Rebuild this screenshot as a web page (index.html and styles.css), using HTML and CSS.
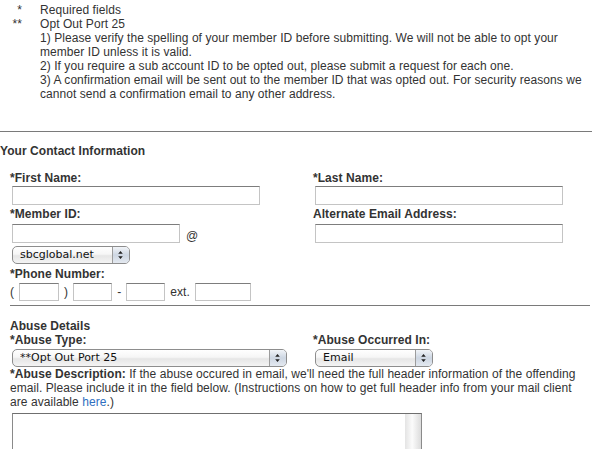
FILE: index.html
```html
<!DOCTYPE html>
<html lang="en">
<head>
  <meta charset="UTF-8">
  <title>Report Abuse - Opt Out Port 25</title>
  <link rel="stylesheet" href="styles.css">
</head>
<body>

<div class="notes">
  <span class="mark">*</span>
  <div>Required fields</div>
  <span class="mark">**</span>
  <div>
    Opt Out Port 25<br>
    1) Please verify the spelling of your member ID before submitting. We will not be able to opt your member ID unless it is valid.<br>
    2) If you require a sub account ID to be opted out, please submit a request for each one.<br>
    3) A confirmation email will be sent out to the member ID that was opted out. For security reasons we cannot send a confirmation email to any other address.
  </div>
</div>

<hr class="rule">

<h3 class="section">Your Contact Information</h3>

<div class="fields">
  <div class="field">
    <label for="first_name">*First Name:</label>
    <input class="text" id="first_name" style="width:248px">
  </div>
  <div class="field">
    <label for="last_name">*Last Name:</label>
    <input class="text" id="last_name" style="width:248px">
  </div>
  <div class="field member">
    <label for="member_id">*Member ID:</label>
    <div class="member-row">
      <input class="text" id="member_id" style="width:168px">
      <span>@</span>
    </div>
    <span class="picker" style="width:118px">
      <select id="domain">
        <option>sbcglobal.net</option>
        <option>att.net</option>
        <option>bellsouth.net</option>
      </select>
      <svg class="spin" viewBox="0 0 17 16" preserveAspectRatio="none">
        <defs>
          <linearGradient id="sg1" x1="0" y1="0" x2="0" y2="1">
            <stop offset="0" stop-color="#f1f4f8"/>
            <stop offset="0.5" stop-color="#cdd6e2"/>
            <stop offset="1" stop-color="#e4e9f0"/>
          </linearGradient>
        </defs>
        <rect width="17" height="16" fill="url(#sg1)"/>
        <path d="M0.5 0V16" stroke="#9c9c9c"/>
        <path d="M6.2 6.8L8.5 4.1L10.8 6.8Z M6.2 9.2L8.5 11.9L10.8 9.2Z" fill="#222"/>
      </svg>
    </span>
  </div>
  <div class="field">
    <label for="alt_email">Alternate Email Address:</label>
    <input class="text alt" id="alt_email" style="width:248px">
  </div>
</div>

<div class="field phone">
  <label>*Phone Number:</label>
  <div class="phone-row">
    <span>(</span>
    <input class="text" style="width:40px">
    <span>)</span>
    <input class="text" style="width:39px">
    <span>-</span>
    <input class="text" style="width:39px">
    <span>ext.</span>
    <input class="text" style="width:56px">
  </div>
</div>

<hr class="rule inset">

<div class="abuse">
  <h4 class="sub">Abuse Details</h4>
  <div class="fields">
    <div class="field">
      <label for="abuse_type">*Abuse Type:</label>
      <span class="picker" style="width:275px">
        <select id="abuse_type">
          <option>**Opt Out Port 25</option>
          <option>Spam</option>
          <option>Phishing</option>
        </select>
        <svg class="spin" viewBox="0 0 17 16" preserveAspectRatio="none">
          <defs>
            <linearGradient id="sg2" x1="0" y1="0" x2="0" y2="1">
              <stop offset="0" stop-color="#f1f4f8"/>
              <stop offset="0.5" stop-color="#cdd6e2"/>
              <stop offset="1" stop-color="#e4e9f0"/>
            </linearGradient>
          </defs>
          <rect width="17" height="16" fill="url(#sg2)"/>
          <path d="M0.5 0V16" stroke="#9c9c9c"/>
          <path d="M6.2 6.8L8.5 4.1L10.8 6.8Z M6.2 9.2L8.5 11.9L10.8 9.2Z" fill="#222"/>
        </svg>
      </span>
    </div>
    <div class="field">
      <label for="abuse_in">*Abuse Occurred In:</label>
      <span class="picker" style="width:118px">
        <select id="abuse_in">
          <option>Email</option>
          <option>Web</option>
          <option>Other</option>
        </select>
        <svg class="spin" viewBox="0 0 17 16" preserveAspectRatio="none">
          <defs>
            <linearGradient id="sg3" x1="0" y1="0" x2="0" y2="1">
              <stop offset="0" stop-color="#f1f4f8"/>
              <stop offset="0.5" stop-color="#cdd6e2"/>
              <stop offset="1" stop-color="#e4e9f0"/>
            </linearGradient>
          </defs>
          <rect width="17" height="16" fill="url(#sg3)"/>
          <path d="M0.5 0V16" stroke="#9c9c9c"/>
          <path d="M6.2 6.8L8.5 4.1L10.8 6.8Z M6.2 9.2L8.5 11.9L10.8 9.2Z" fill="#222"/>
        </svg>
      </span>
    </div>
  </div>
  <p class="desc"><b>*Abuse Description:</b> If the abuse occured in email, we'll need the full header information of the offending email. Please include it in the field below. (Instructions on how to get full header info from your mail client are available <a href="#">here</a>.)</p>
  <textarea class="details" id="descripcion"></textarea>
</div>

</body>
</html>
```

FILE: styles.css
```css
html { overflow: hidden; }
body { margin: 0; padding-top: 3px; font-family: "Liberation Sans", Arial, Helvetica, sans-serif; font-size: 12px; line-height: 14px; letter-spacing: 0.06px; color: #333; background: #fff; }

.notes { display: grid; grid-template-columns: 22px 1fr; column-gap: 18px; }
.notes .mark { text-align: right; }

.rule { height: 0; border: 0; border-top: 1px solid #7a7a7a; margin: 30px 0 0; }
.rule.inset { margin: 4px 2px 0 10px; }

.section { margin: 12px 0 0; font-size: 12px; line-height: 14px; font-weight: bold; }
.sub { margin: 0; font-size: 12px; line-height: 14px; font-weight: bold; }

.fields { display: grid; grid-template-columns: 303px 1fr; padding-left: 10px; }
.section + .fields { margin-top: 13px; }
.field label { display: block; font-weight: bold; }
.fields .field:nth-child(n+3) label { margin-top: 2px; }

.text { display: block; box-sizing: border-box; height: 19px; margin: 1px 0 0 2px; padding: 1px 3px; border: 1px solid #c4c4c4; border-top-color: #7d7d7d; background: #fff; font: 12px "Liberation Sans", Arial, sans-serif; }
.text.alt { margin-top: 3px; }

.member-row { display: flex; align-items: flex-end; gap: 6px; margin-top: 3px; }
.member-row .text { margin-top: 0; }

.picker { position: relative; display: block; height: 18px; margin: 3px 0 0 2px; }
.picker select { appearance: none; -webkit-appearance: none; display: block; box-sizing: border-box; width: 100%; height: 18px; margin: 0; padding: 0 0 0 7px; border: 1px solid #8d8d8d; border-radius: 5px; background: linear-gradient(#ffffff, #f6f6f6 45%, #e6e6e6 55%, #f4f4f4); font: 11px "DejaVu Sans", sans-serif; color: #111; line-height: 16px; }
.spin { position: absolute; top: 1px; right: 1px; width: 17px; height: 16px; border-radius: 0 4px 4px 0; pointer-events: none; }

.phone { padding-left: 10px; margin-top: 3px; }
.phone label { margin-top: 1px; }
.phone-row { display: flex; align-items: center; gap: 5px; margin-top: 2px; }
.phone-row .text { height: 18px; margin: 0; }

.abuse { padding-left: 10px; margin-top: 13px; }
.abuse .fields { padding-left: 0; }
.abuse .picker { margin-top: 2px; }
.desc { max-width: 572px; margin: 0; }
.desc a { color: #2f6fbf; text-decoration: none; }

.details { display: block; box-sizing: border-box; width: 410px; height: 80px; margin: 4px 0 0 2px; padding: 2px; border: 1px solid #8a8a8a; border-top-color: #6f6f6f; resize: none; overflow: hidden; background: linear-gradient(to right, #e4e4e4, #fbfbfb 45%, #dcdcdc) right top / 16px 100% no-repeat, #fff; font: 12px "Liberation Sans", Arial, sans-serif; }
```
